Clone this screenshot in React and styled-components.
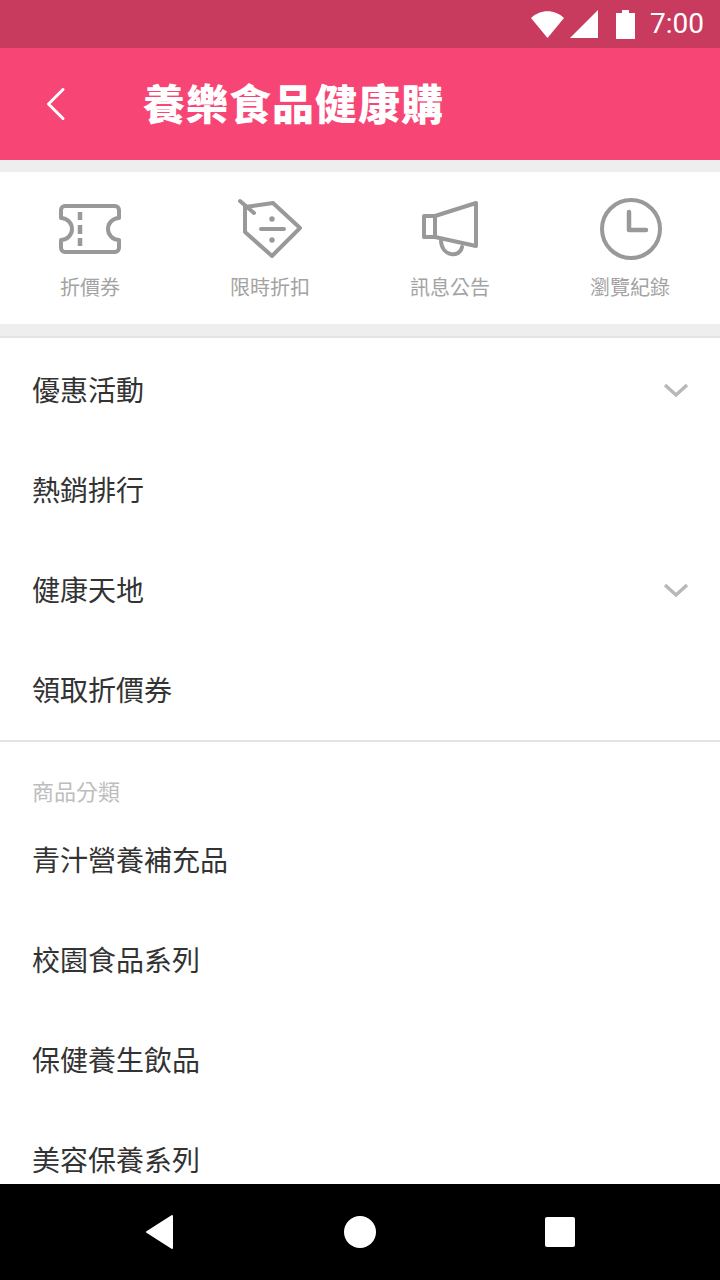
import React from 'react';
import styled, { createGlobalStyle } from 'styled-components';

const CJK = '"Roboto", "Noto Sans CJK TC", sans-serif';

const GlobalStyle = createGlobalStyle`
  html, body {
    margin: 0;
    padding: 0;
    background: #fff;
    font-family: ${CJK};
  }
`;

const Screen = styled.div`
  width: 720px;
  height: 1280px;
  display: flex;
  flex-direction: column;
  overflow: hidden;
  background: #fff;
`;

const StatusBar = styled.div`
  height: 48px;
  flex: none;
  background: #c93a5f;
  color: #fff;
  display: flex;
  align-items: center;
  justify-content: flex-end;
  padding-right: 16px;
`;

const StatusIcon = styled.svg`
  display: block;
  margin-right: ${(p) => p.$gap}px;
`;

const Clock = styled.span`
  font-size: 28px;
  line-height: 48px;
  width: 56px;
  text-align: right;
  white-space: nowrap;
`;

const Header = styled.header`
  height: 112px;
  flex: none;
  background: #f74675;
  display: flex;
  align-items: center;
  padding-left: 44px;
`;

const BackButton = styled.svg`
  display: block;
  margin-right: 75px;
`;

const Logo = styled.h1`
  margin: 3px 0 0;
  font-size: 42px;
  line-height: 56px;
  font-weight: 900;
  letter-spacing: 1px;
  color: #fff;
  white-space: nowrap;
`;

const Content = styled.main`
  flex: 1;
  min-height: 0;
  overflow: hidden;
  background: #fff;
`;

const Shortcuts = styled.nav`
  height: 152px;
  border-top: 12px solid #eee;
  border-bottom: 12px solid #eee;
  display: grid;
  grid-template-columns: repeat(4, 1fr);
`;

const Shortcut = styled.a`
  display: flex;
  flex-direction: column;
  align-items: center;
  padding-top: 24px;
  color: #a3a3a3;
  font-size: 20px;
  line-height: 28px;
`;

const ShortcutIcon = styled.svg`
  display: block;
  width: 72px;
  height: 68px;
  margin-bottom: 10px;
`;

const Section = styled.section`
  border-top: 2px solid #e4e4e4;
  padding: ${(p) => p.$pad || 0}px 0;
`;

const Row = styled.div`
  height: 100px;
  display: flex;
  align-items: center;
  justify-content: space-between;
  padding: 0 32px;
  font-size: 28px;
  color: #333;
`;

const Label = styled.div`
  height: 31px;
  padding: 36px 32px 0;
  font-size: 22px;
  line-height: 30px;
  color: #bdbdbd;
`;

const Chevron = styled.svg`
  display: block;
  margin: 2px -1px 0 0;
`;

const NavBar = styled.footer`
  height: 96px;
  flex: none;
  background: #000;
  display: grid;
  grid-template-columns: repeat(3, 200px);
  justify-content: center;
  align-items: center;
  justify-items: center;
`;

const HomeDot = styled.div`
  width: 32px;
  height: 32px;
  border-radius: 50%;
  background: #fff;
`;

const Square = styled.div`
  width: 30px;
  height: 30px;
  border-radius: 2px;
  background: #fff;
`;

const tickets = (
  <g fill="none" stroke="#999" strokeWidth="4" strokeLinejoin="round">
    <path d="M11 10h50a4 4 0 0 1 4 4v8a11 11 0 0 0 0 22v8a4 4 0 0 1-4 4H11a4 4 0 0 1-4-4v-8a11 11 0 0 0 0-22v-8a4 4 0 0 1 4-4z" />
    <path d="M26 16v8M26 29v9M26 42v8" strokeWidth="4.5" />
  </g>
);

const saleTag = (
  <g fill="none" stroke="#999" strokeWidth="4" strokeLinejoin="round" strokeLinecap="round">
    <path d="M11 11 L39 7 L66 32 L38 60 L11 36 Z" />
    <path d="M6 5 L20 17" />
    <path d="M27 33 H50" />
    <circle cx="38" cy="23" r="1.2" fill="#999" strokeWidth="3" />
    <circle cx="38" cy="44" r="1.2" fill="#999" strokeWidth="3" />
  </g>
);

const megaphone = (
  <g fill="none" stroke="#999" strokeWidth="4" strokeLinejoin="round" strokeLinecap="round">
    <path d="M10 20 H21 V41 H10 Z" />
    <path d="M21 20 L62 7 V50 L21 41" />
    <path d="M27 45 C28 61 46 62 48 51" />
  </g>
);

const clock = (
  <g fill="none" stroke="#999" strokeWidth="4">
    <circle cx="37" cy="33" r="29" />
    <path d="M35 16 V34 H52" strokeWidth="4.5" strokeLinecap="round" strokeLinejoin="round" />
  </g>
);

const shortcuts = [
  { label: '折價券', icon: tickets },
  { label: '限時折扣', icon: saleTag },
  { label: '訊息公告', icon: megaphone },
  { label: '瀏覽紀錄', icon: clock },
];

const promoRows = [
  { label: '優惠活動', more: true },
  { label: '熱銷排行' },
  { label: '健康天地', more: true },
  { label: '領取折價券' },
];

const categories = ['青汁營養補充品', '校園食品系列', '保健養生飲品', '美容保養系列'];

const App = () => (
  <Screen>
    <GlobalStyle />
    <StatusBar>
      <StatusIcon $gap={6} width="33" height="28" viewBox="0 0 33 28">
        <path d="M0 8 C9 -1 24 -1 33 8 L16.5 28 Z" fill="#fff" />
      </StatusIcon>
      <StatusIcon $gap={18} width="28" height="28" viewBox="0 0 28 28">
        <path d="M0 28 L28 0 V28 Z" fill="#fff" />
      </StatusIcon>
      <StatusIcon $gap={13} width="19" height="30" viewBox="0 0 19 30">
        <path d="M6 1 H13 V4 H19 V30 H0 V4 H6 Z" fill="#fff" />
      </StatusIcon>
      <Clock>7:00</Clock>
    </StatusBar>

    <Header>
      <BackButton width="24" height="36" viewBox="0 0 24 36">
        <path d="M19 3.5 L4.5 18 L19 32.5" fill="none" stroke="#fff" strokeWidth="3" strokeLinecap="round" strokeLinejoin="round" />
      </BackButton>
      <Logo>養樂食品健康購</Logo>
    </Header>

    <Content>
      <Shortcuts>
        {shortcuts.map((item) => (
          <Shortcut key={item.label}>
            <ShortcutIcon viewBox="0 0 72 68">{item.icon}</ShortcutIcon>
            {item.label}
          </Shortcut>
        ))}
      </Shortcuts>

      <Section $pad={1}>
        {promoRows.map((row) => (
          <Row key={row.label}>
            {row.label}
            {row.more && (
              <Chevron width="26" height="16" viewBox="0 0 26 16">
                <path d="M2 3 L13 13 L24 3" fill="none" stroke="#b8b8b8" strokeWidth="3.5" />
              </Chevron>
            )}
          </Row>
        ))}
      </Section>

      <Section>
        <Label>商品分類</Label>
        {categories.map((name) => (
          <Row key={name}>{name}</Row>
        ))}
      </Section>
    </Content>

    <NavBar>
      <svg width="32" height="36" viewBox="0 0 32 36">
        <path d="M28 2 V34 L3 18 Z" fill="#fff" stroke="#fff" strokeWidth="2" strokeLinejoin="round" />
      </svg>
      <HomeDot />
      <Square />
    </NavBar>
  </Screen>
);

export default App;
